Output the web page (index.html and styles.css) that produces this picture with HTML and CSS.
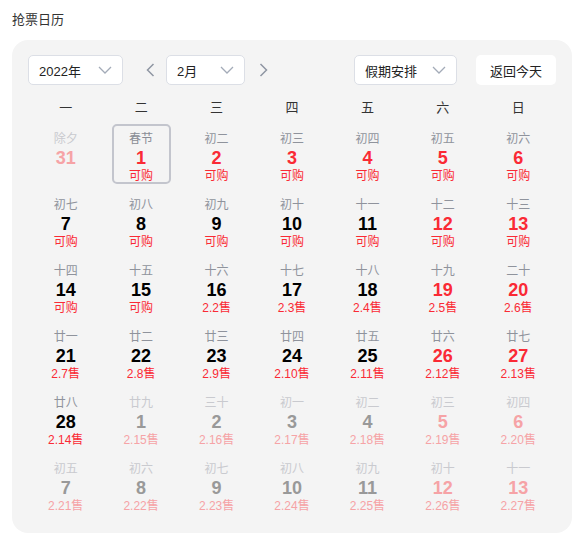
FILE: index.html
```html
<!DOCTYPE html>
<html lang="zh-CN">
  <head>
    <meta charset="UTF-8" />
    <meta name="viewport" content="width=device-width, initial-scale=1.0" />
    <title>抢票日历</title>
    <link rel="stylesheet" href="styles.css">
  </head>
  <body>
    <h1 class="page-title">抢票日历</h1>
    <div class="calendar">
      <div class="toolbar">
        <div class="select year-select"><span>2022年</span><svg class="chev" width="14" height="8" viewBox="0 0 14 8"><path d="M1 1l6 6 6-6" fill="none" stroke="#a3abb8" stroke-width="1.3"/></svg></div>
        <button class="arrow arrow-prev"><svg width="9" height="14" viewBox="0 0 9 14"><path d="M7.5 1L1.5 7l6 6" fill="none" stroke="#8f96a3" stroke-width="1.5"/></svg></button>
        <div class="select month-select"><span>2月</span><svg class="chev" width="14" height="8" viewBox="0 0 14 8"><path d="M1 1l6 6 6-6" fill="none" stroke="#a3abb8" stroke-width="1.3"/></svg></div>
        <button class="arrow arrow-next"><svg width="9" height="14" viewBox="0 0 9 14"><path d="M1.5 1l6 6-6 6" fill="none" stroke="#8f96a3" stroke-width="1.5"/></svg></button>
        <div class="spacer"></div>
        <div class="select holiday-select"><span>假期安排</span><svg class="chev" width="14" height="8" viewBox="0 0 14 8"><path d="M1 1l6 6 6-6" fill="none" stroke="#a3abb8" stroke-width="1.3"/></svg></div>
        <button class="today-btn">返回今天</button>
      </div>

      <div class="weekdays">
        <span>一</span><span>二</span><span>三</span><span>四</span><span>五</span><span>六</span><span>日</span>
      </div>

      <div class="days">
        <div class="day off red"><div class="inner"><span class="lunar">除夕</span><span class="num">31</span></div></div>
        <div class="day red selected"><div class="inner"><span class="lunar">春节</span><span class="num">1</span><span class="sub">可购</span></div></div>
        <div class="day red"><div class="inner"><span class="lunar">初二</span><span class="num">2</span><span class="sub">可购</span></div></div>
        <div class="day red"><div class="inner"><span class="lunar">初三</span><span class="num">3</span><span class="sub">可购</span></div></div>
        <div class="day red"><div class="inner"><span class="lunar">初四</span><span class="num">4</span><span class="sub">可购</span></div></div>
        <div class="day red"><div class="inner"><span class="lunar">初五</span><span class="num">5</span><span class="sub">可购</span></div></div>
        <div class="day red"><div class="inner"><span class="lunar">初六</span><span class="num">6</span><span class="sub">可购</span></div></div>

        <div class="day"><div class="inner"><span class="lunar">初七</span><span class="num">7</span><span class="sub">可购</span></div></div>
        <div class="day"><div class="inner"><span class="lunar">初八</span><span class="num">8</span><span class="sub">可购</span></div></div>
        <div class="day"><div class="inner"><span class="lunar">初九</span><span class="num">9</span><span class="sub">可购</span></div></div>
        <div class="day"><div class="inner"><span class="lunar">初十</span><span class="num">10</span><span class="sub">可购</span></div></div>
        <div class="day"><div class="inner"><span class="lunar">十一</span><span class="num">11</span><span class="sub">可购</span></div></div>
        <div class="day red"><div class="inner"><span class="lunar">十二</span><span class="num">12</span><span class="sub">可购</span></div></div>
        <div class="day red"><div class="inner"><span class="lunar">十三</span><span class="num">13</span><span class="sub">可购</span></div></div>

        <div class="day"><div class="inner"><span class="lunar">十四</span><span class="num">14</span><span class="sub">可购</span></div></div>
        <div class="day"><div class="inner"><span class="lunar">十五</span><span class="num">15</span><span class="sub">可购</span></div></div>
        <div class="day"><div class="inner"><span class="lunar">十六</span><span class="num">16</span><span class="sub">2.2售</span></div></div>
        <div class="day"><div class="inner"><span class="lunar">十七</span><span class="num">17</span><span class="sub">2.3售</span></div></div>
        <div class="day"><div class="inner"><span class="lunar">十八</span><span class="num">18</span><span class="sub">2.4售</span></div></div>
        <div class="day red"><div class="inner"><span class="lunar">十九</span><span class="num">19</span><span class="sub">2.5售</span></div></div>
        <div class="day red"><div class="inner"><span class="lunar">二十</span><span class="num">20</span><span class="sub">2.6售</span></div></div>

        <div class="day"><div class="inner"><span class="lunar">廿一</span><span class="num">21</span><span class="sub">2.7售</span></div></div>
        <div class="day"><div class="inner"><span class="lunar">廿二</span><span class="num">22</span><span class="sub">2.8售</span></div></div>
        <div class="day"><div class="inner"><span class="lunar">廿三</span><span class="num">23</span><span class="sub">2.9售</span></div></div>
        <div class="day"><div class="inner"><span class="lunar">廿四</span><span class="num">24</span><span class="sub">2.10售</span></div></div>
        <div class="day"><div class="inner"><span class="lunar">廿五</span><span class="num">25</span><span class="sub">2.11售</span></div></div>
        <div class="day red"><div class="inner"><span class="lunar">廿六</span><span class="num">26</span><span class="sub">2.12售</span></div></div>
        <div class="day red"><div class="inner"><span class="lunar">廿七</span><span class="num">27</span><span class="sub">2.13售</span></div></div>

        <div class="day"><div class="inner"><span class="lunar">廿八</span><span class="num">28</span><span class="sub">2.14售</span></div></div>
        <div class="day off"><div class="inner"><span class="lunar">廿九</span><span class="num">1</span><span class="sub">2.15售</span></div></div>
        <div class="day off"><div class="inner"><span class="lunar">三十</span><span class="num">2</span><span class="sub">2.16售</span></div></div>
        <div class="day off"><div class="inner"><span class="lunar">初一</span><span class="num">3</span><span class="sub">2.17售</span></div></div>
        <div class="day off"><div class="inner"><span class="lunar">初二</span><span class="num">4</span><span class="sub">2.18售</span></div></div>
        <div class="day off red"><div class="inner"><span class="lunar">初三</span><span class="num">5</span><span class="sub">2.19售</span></div></div>
        <div class="day off red"><div class="inner"><span class="lunar">初四</span><span class="num">6</span><span class="sub">2.20售</span></div></div>

        <div class="day off"><div class="inner"><span class="lunar">初五</span><span class="num">7</span><span class="sub">2.21售</span></div></div>
        <div class="day off"><div class="inner"><span class="lunar">初六</span><span class="num">8</span><span class="sub">2.22售</span></div></div>
        <div class="day off"><div class="inner"><span class="lunar">初七</span><span class="num">9</span><span class="sub">2.23售</span></div></div>
        <div class="day off"><div class="inner"><span class="lunar">初八</span><span class="num">10</span><span class="sub">2.24售</span></div></div>
        <div class="day off"><div class="inner"><span class="lunar">初九</span><span class="num">11</span><span class="sub">2.25售</span></div></div>
        <div class="day off red"><div class="inner"><span class="lunar">初十</span><span class="num">12</span><span class="sub">2.26售</span></div></div>
        <div class="day off red"><div class="inner"><span class="lunar">十一</span><span class="num">13</span><span class="sub">2.27售</span></div></div>
      </div>
    </div>
  </body>
</html>
```

FILE: styles.css
```css
body {
  font-family: "Liberation Sans", "Noto Sans CJK SC", sans-serif;
  margin: 0;
  padding: 12px 4px 0 12px;
  background-color: #fff;
  color: #333;
}
.page-title {
  margin: 0 0 12px;
  font-size: 13px;
  font-weight: normal;
  line-height: 16px;
  color: #333;
}
.calendar {
  background-color: #f4f4f4;
  border-radius: 16px;
  padding: 15px 16px 16px;
}

/* toolbar */
.toolbar {
  display: flex;
  align-items: center;
  height: 30px;
}
.select {
  display: flex;
  align-items: center;
  justify-content: space-between;
  box-sizing: border-box;
  height: 30px;
  padding: 0 10px 0 10px;
  background-color: #fff;
  border: 1px solid #dcdfe6;
  border-radius: 5px;
  font-size: 13px;
  color: #222;
}
.year-select {
  width: 95px;
}
.month-select {
  width: 79px;
}
.holiday-select {
  width: 103px;
}
.arrow {
  display: flex;
  align-items: center;
  justify-content: center;
  width: 16px;
  height: 30px;
  padding: 0;
  border: none;
  background: none;
}
.arrow-prev {
  margin: 0 8px 0 19px;
}
.arrow-next {
  margin-left: 10px;
}
.spacer {
  flex-grow: 1;
}
.today-btn {
  margin-left: 19px;
  width: 80px;
  height: 30px;
  border: none;
  border-radius: 5px;
  background-color: #fff;
  font-family: inherit;
  font-size: 13px;
  color: #222;
}

/* grid */
.weekdays {
  display: grid;
  grid-template-columns: repeat(7, 1fr);
  height: 24px;
  margin-top: 11px;
  line-height: 24px;
  font-size: 13px;
  text-align: center;
  color: #333;
}
.days {
  display: grid;
  grid-template-columns: repeat(7, 1fr);
  grid-auto-rows: 66px;
  margin-top: 1px;
}
.day {
  display: flex;
  justify-content: center;
}
.inner {
  display: flex;
  flex-direction: column;
  align-items: center;
  box-sizing: border-box;
  width: 59px;
  height: 60px;
  margin-top: 3px;
  padding-top: 4px;
  border: 2px solid transparent;
  border-radius: 5px;
}
.day.selected .inner {
  border-color: #c3c5cd;
}
.lunar {
  font-size: 12px;
  line-height: 18px;
  color: #8f939c;
}
.num {
  font-size: 18px;
  font-weight: bold;
  line-height: 20px;
  color: #000;
}
.sub {
  font-size: 12px;
  line-height: 16px;
  color: #fa2a35;
}
.day.red .num {
  color: #fa2a35;
}
.day.off .lunar {
  color: #c9cacf;
}
.day.off .num {
  color: #999;
}
.day.off.red .num,
.day.off .sub {
  color: #f6a3a6;
}
.day.selected .lunar {
  color: #8a8d96;
}
```
